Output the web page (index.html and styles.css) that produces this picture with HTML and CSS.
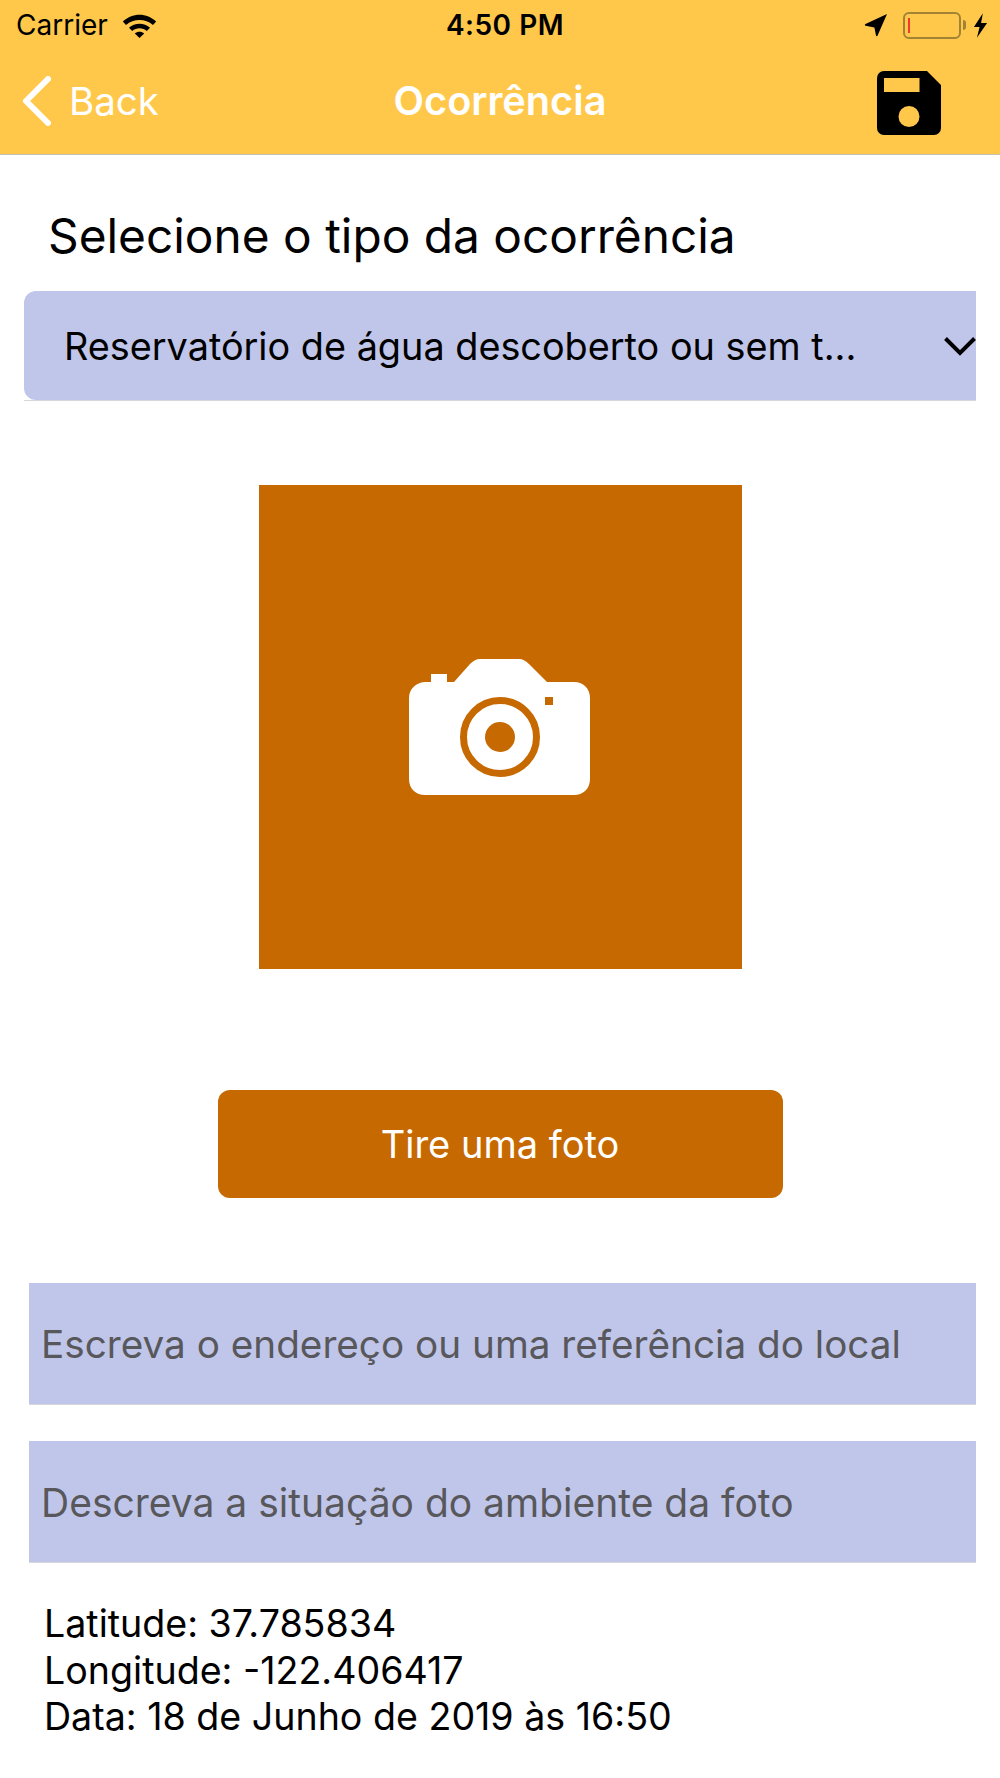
FILE: index.html
```html
<!DOCTYPE html>
<html lang="en">
<head>
    <meta charset="UTF-8">
    <meta name="viewport" content="width=device-width, initial-scale=1.0">
    <title>Ocorrência</title>
    <link rel="stylesheet" href="styles.css">
</head>
<body>
    <header class="top">
        <div class="status">
            <div class="status-left">
                <span class="carrier">Carrier</span>
                <svg class="wifi" width="35" height="25" viewBox="0 0 35 25">
                    <path d="M0.8 8.600C10 -0.600 25 -0.600 34.200 8.600L31 12C23.500 5.200 11.500 5.200 4 12Z"/>
                    <path d="M7 14.800C12.800 9.400 22.200 9.400 28 14.800L24.800 18C20.600 14.400 14.400 14.400 10.200 18Z"/>
                    <path d="M12.800 20.400C15.400 18.200 19.600 18.200 22.200 20.400L17.500 25Z"/>
                </svg>
            </div>
            <span class="clock">4:50 PM</span>
            <div class="status-right">
                <svg class="arrow" width="24" height="24" viewBox="0 0 24 24">
                    <path d="M23 1L13.600 22.600C13.200 23.400 12.200 23.300 12 22.400L10.400 14.600L1.600 12.800C0.700 12.600 0.600 11.500 1.500 11.100Z"/>
                </svg>
                <div class="battery"><div class="battery-level"></div></div>
                <div class="battery-cap"></div>
                <svg class="bolt" width="15" height="25" viewBox="0 0 16 26">
                    <path d="M10.500 0L1 14.600H7L4.200 26L15 10.400H8.600Z"/>
                </svg>
            </div>
        </div>
        <nav class="nav">
            <div class="back">
                <svg width="30" height="50" viewBox="0 0 30 50">
                    <path d="M27 3L5 25L27 47" fill="none" stroke="#fff" stroke-width="6" stroke-linecap="round" stroke-linejoin="round"/>
                </svg>
                <span>Back</span>
            </div>
            <h1>Ocorrência</h1>
            <svg class="save" width="64" height="64" viewBox="0 0 64 64">
                <path fill-rule="evenodd" d="M7 0H50L64 14V57A7 7 0 0 1 57 64H7A7 7 0 0 1 0 57V7A7 7 0 0 1 7 0ZM7 7V21H42.500V7ZM32 35A10.500 10.500 0 1 0 32 56A10.500 10.500 0 1 0 32 35Z"/>
            </svg>
        </nav>
    </header>

    <main class="content">
        <h2>Selecione o tipo da ocorrência</h2>
        <div class="picker">
            <div class="picker-box">
                <span>Reservatório de água descoberto ou sem t...</span>
                <svg width="34" height="20" viewBox="0 0 34 20">
                    <path d="M2.500 2.500L17 17L31.500 2.500" fill="none" stroke="#000" stroke-width="4"/>
                </svg>
            </div>
        </div>

        <div class="photo">
            <svg width="181" height="136" viewBox="0 0 181 136">
                <path fill="#fff" d="M17 23H22V15H38V23H45L61 5C64 2 67 0 71 0H110C114 0 117 2 120 5L138 23H165C175 23 181 30 181 39V120C181 130 174 136 165 136H16C7 136 0 130 0 120V39C0 30 7 23 17 23Z"/>
                <circle cx="91" cy="78" r="36.500" fill="none" stroke="#c66900" stroke-width="7"/>
                <circle cx="91" cy="78" r="15" fill="#c66900"/>
                <rect x="136" y="38" width="8" height="8" fill="#c66900"/>
            </svg>
        </div>

        <button class="shot">Tire uma foto</button>

        <div class="field first">Escreva o endereço ou uma referência do local</div>
        <div class="field second">Descreva a situação do ambiente da foto</div>

        <div class="info">
            <div>Latitude: 37.785834</div>
            <div>Longitude: -122.406417</div>
            <div>Data: 18 de Junho de 2019 às 16:50</div>
        </div>
    </main>
</body>
</html>
```

FILE: styles.css
```css
* {
    box-sizing: border-box;
    font-family: Inter, "Liberation Sans", sans-serif;
}
body {
    margin: 0;
    background-color: #ffffff;
    color: #000000;
}
.top {
    height: 155px;
    background-color: #ffc84a;
    border-bottom: 1px solid #c4c0b4;
}
.status {
    height: 50px;
    padding: 0 12px 0 16px;
    display: flex;
    align-items: center;
    justify-content: space-between;
    position: relative;
}
.status-left, .status-right {
    display: flex;
    align-items: center;
}
.carrier {
    font-size: 28px;
}
.wifi {
    margin-left: 14px;
}
.clock {
    font-size: 28px;
    font-weight: 600;
    letter-spacing: 0.5px;
    position: absolute;
    left: 10px;
    right: 0;
    text-align: center;
}
.battery {
    width: 58px;
    height: 27px;
    margin-left: 15px;
    padding: 4px 3px;
    border: 2px solid #a28235;
    border-radius: 6px;
}
.battery-level {
    width: 2px;
    height: 100%;
    background-color: #f5382c;
}
.battery-cap {
    width: 3px;
    height: 10px;
    margin-left: 2px;
    background-color: #a28235;
    border-radius: 0 3px 3px 0;
}
.bolt {
    margin-left: 7px;
}
.nav {
    height: 104px;
    padding: 0 59px 2px 21px;
    display: flex;
    align-items: center;
    justify-content: space-between;
    position: relative;
}
.back {
    display: flex;
    align-items: center;
    gap: 18px;
    color: #ffffff;
    font-size: 38.500px;
}
.back svg {
    margin-top: -1px;
}
.nav h1 {
    margin: 0;
    position: absolute;
    left: 0;
    right: 0;
    text-align: center;
    color: #ffffff;
    font-size: 39.700px;
    font-weight: 600;
}
.save {
    position: relative;
    top: 2px;
}
.content {
    padding: 0 24px;
}
.content h2 {
    margin: 0;
    padding: 52px 0 0 24px;
    height: 136px;
    font-size: 47.800px;
    font-weight: 400;
}
.picker {
    height: 110px;
    border-bottom: 1px solid #d8d8dc;
}
.picker-box {
    height: 109px;
    padding-left: 40px;
    display: flex;
    align-items: center;
    justify-content: space-between;
    background-color: #c0c6e9;
    border-radius: 12px 0 0 12px;
    font-size: 37.800px;
}
.picker-box svg {
    margin-right: -1px;
}
.photo {
    width: 483px;
    height: 484px;
    margin: 84px auto 0;
    padding-right: 2px;
    display: flex;
    align-items: center;
    justify-content: center;
    background-color: #c66900;
}
.shot {
    display: block;
    width: 565px;
    height: 108px;
    margin: 121px auto 0;
    border: none;
    border-radius: 12px;
    background-color: #c66900;
    color: #ffffff;
    font-size: 38px;
}
.field {
    height: 122px;
    margin: 36px 0 0 5px;
    padding: 1px 0 0 12px;
    display: flex;
    align-items: center;
    background-color: #c0c6e9;
    color: #58585c;
    border-bottom: 1px solid #d8d8dc;
}
.first {
    margin-top: 85px;
    font-size: 38.700px;
}
.second {
    font-size: 39px;
}
.info {
    margin: 38px 0 0 20px;
    font-size: 37.600px;
    line-height: 46.500px;
}
```
